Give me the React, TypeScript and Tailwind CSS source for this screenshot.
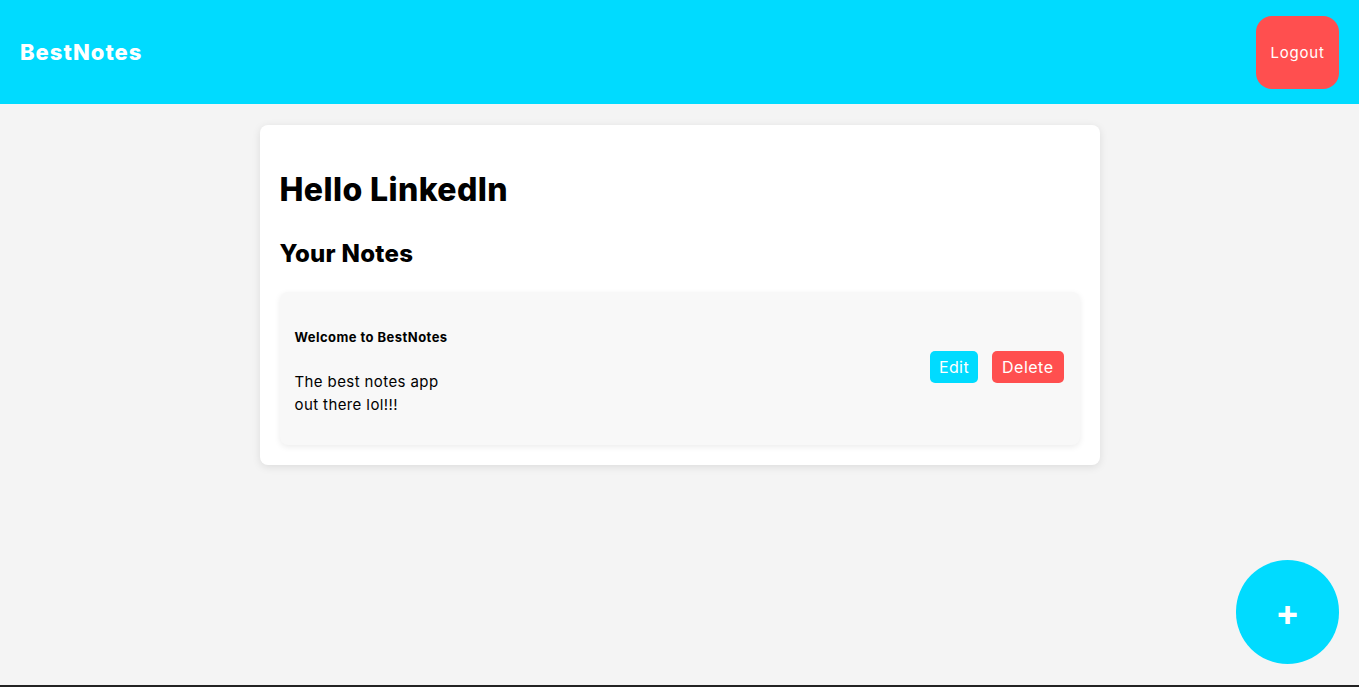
import { useState } from "react";

type Note = {
  id: number;
  title: string;
  content: string;
};

const Navbar = () => {
  return (
    <header className="h-[104px] bg-[#00dbff] flex items-center justify-between pl-5 pr-5">
      <h1 className="text-[22px] font-extrabold text-white tracking-[1px]">BestNotes</h1>
      <button className="w-[83px] h-[73px] bg-[#ff4f4f] text-white text-[15px] tracking-[0.8px] rounded-[16px] pt-[2px]">
        Logout
      </button>
    </header>
  );
};

const NoteCard = ({ note }: { note: Note }) => {
  return (
    <div className="bg-[#f8f8f8] rounded-lg shadow-[0_2px_6px_rgba(0,0,0,0.08)] flex items-center justify-between pl-[15px] pr-4 pt-[15px] pb-4">
      <div className="pt-5 pb-[13px]">
        <h4 className="text-[13px] leading-[20px] font-bold tracking-[0.45px]">{note.title}</h4>
        <p className="mt-[23px] text-[15px] leading-[23px] tracking-[0.4px] max-w-[160px]">{note.content}</p>
      </div>
      <div className="flex items-center gap-[14px] mb-[2px]">
        <button className="h-8 px-[9px] bg-[#00dbff] text-white text-base tracking-[0.4px] rounded-[5px]">
          Edit
        </button>
        <button className="h-8 px-[10px] bg-[#ff4f4f] text-white text-base tracking-[0.5px] rounded-[5px]">
          Delete
        </button>
      </div>
    </div>
  );
};

export default function App() {
  const [notes] = useState<Note[]>([
    { id: 1, title: "Welcome to BestNotes", content: "The best notes app out there lol!!!" },
  ]);

  return (
    <div
      className="min-h-screen bg-[#f4f4f4] text-black border-b-2 border-[#222]"
      style={{ fontFamily: "Inter, 'Noto Sans', sans-serif" }}
    >
      <Navbar />
      <main className="flex justify-center pt-[21px]">
        <div className="w-[840px] bg-white rounded-lg shadow-[0_2px_8px_rgba(0,0,0,0.1)] p-5">
          <h2 className="mt-[21px] text-[32px] leading-[48px] font-extrabold tracking-[0.4px]">Hello LinkedIn</h2>
          <h3 className="mt-[22px] mb-5 text-2xl leading-9 font-extrabold tracking-[0.3px]">Your Notes</h3>
          {notes.map((note) => (
            <NoteCard key={note.id} note={note} />
          ))}
        </div>
      </main>
      <button className="fixed right-5 bottom-[23px] w-[103px] h-[104px] rounded-full bg-[#00dbff] text-white text-[36px] font-bold flex items-center justify-center">
        +
      </button>
    </div>
  );
}
